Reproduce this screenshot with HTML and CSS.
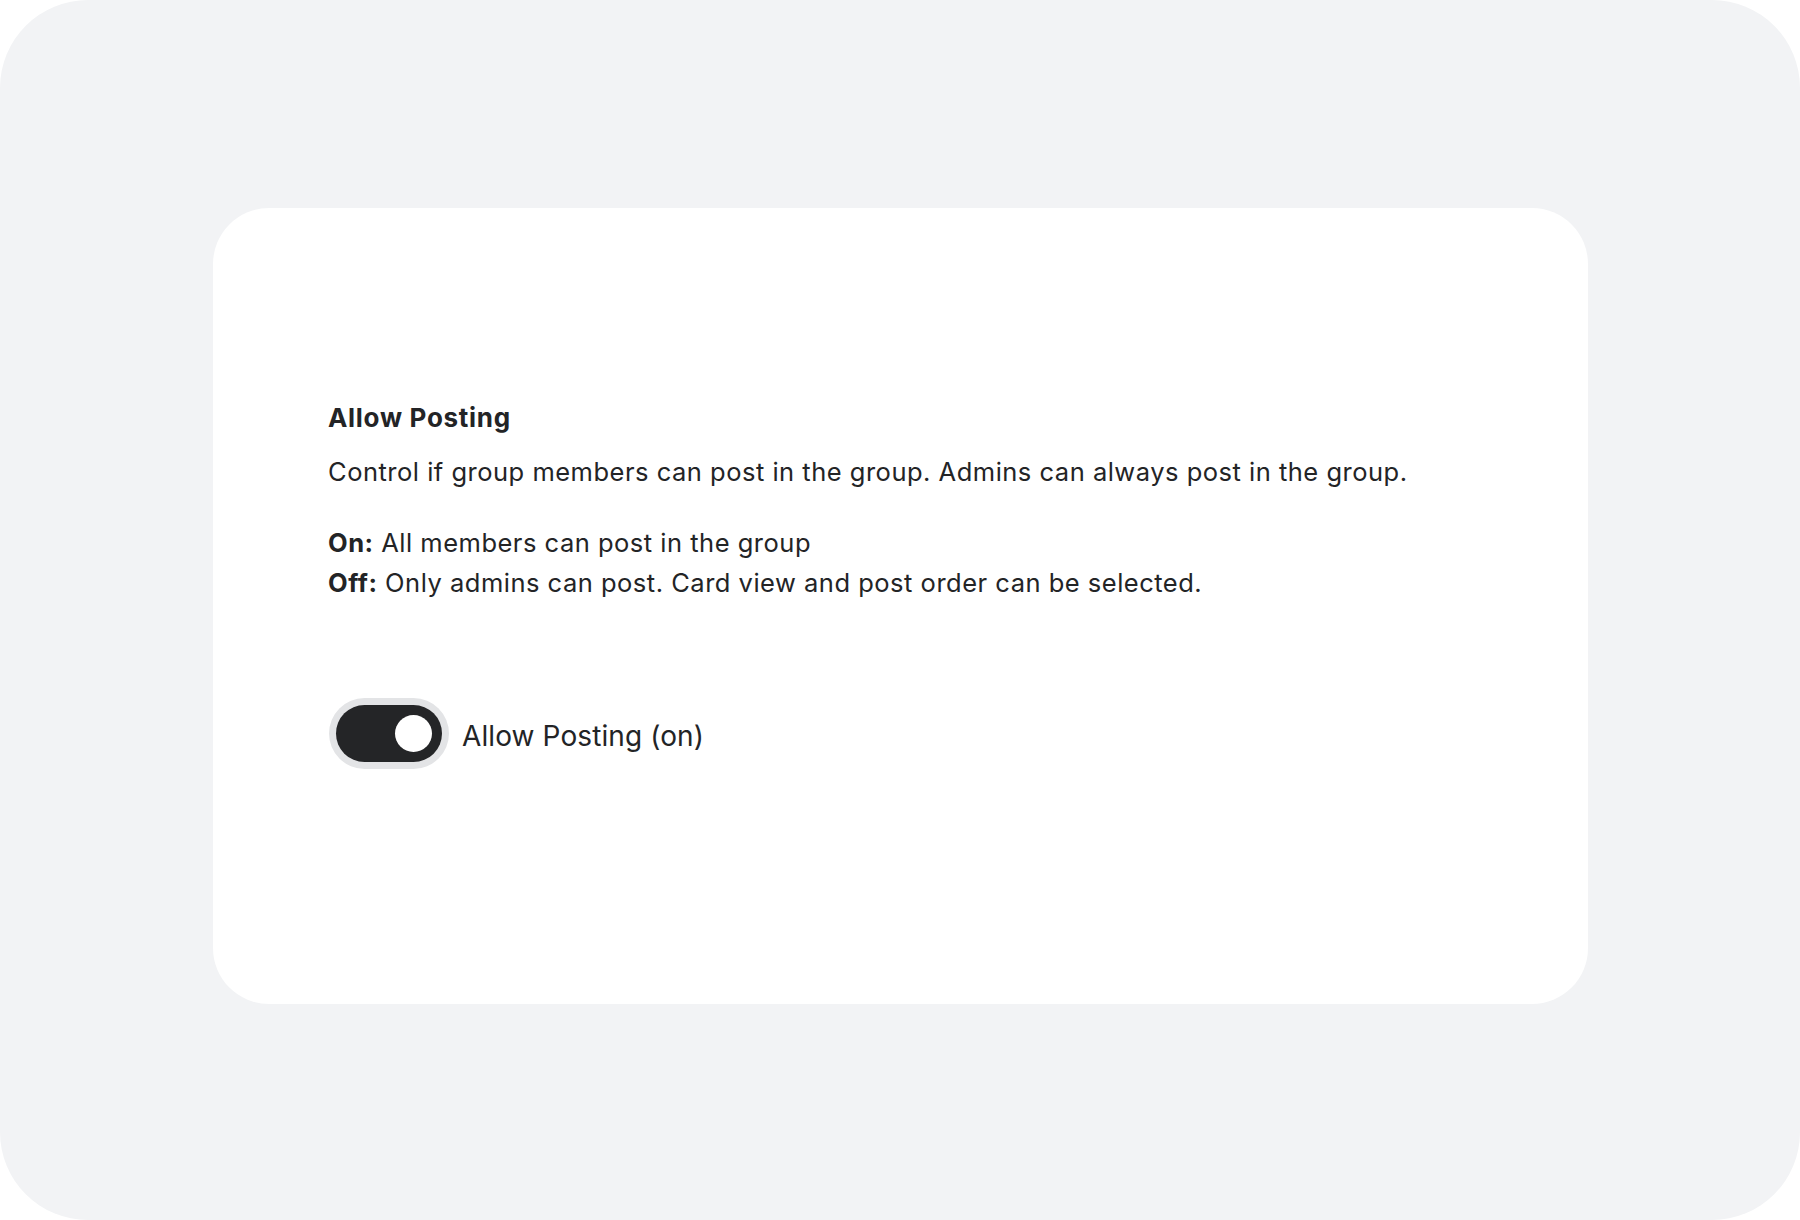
FILE: index.html
```html
<!DOCTYPE html>
<html>
  <head>
    <title>Group settings</title>
    <link rel="stylesheet" href="styles.css">
  </head>
  <body>
    <div class="frame">
      <div class="card">
        <h2 class="setting-title">Allow Posting</h2>
        <p class="setting-desc">Control if group members can post in the group. Admins can always post in the group.</p>
        <p class="setting-modes">
          <b>On:</b> All members can post in the group<br>
          <b>Off:</b> Only admins can post. Card view and post order can be selected.
        </p>

        <label class="switch-row">
          <input type="checkbox" class="switch-input" checked>
          <span class="switch-track"><span class="switch-knob"></span></span>
          <span class="switch-label">Allow Posting (on)</span>
        </label>
      </div>
    </div>
  </body>
</html>
```

FILE: styles.css
```css
  /* Page + grey backdrop */
  body {
    margin: 0;
    background: #ffffff;
    font-family: Inter, "Liberation Sans", sans-serif;
    color: #232426;
  }
  .frame {
    width: 1800px;
    height: 1220px;
    box-sizing: border-box;
    padding: 208px 212px 0 213px;
    background-color: #f2f3f5;
    border-radius: 88px;
  }
  /* White settings card */
  .card {
    height: 796px;
    box-sizing: border-box;
    padding: 194px 115px 0 115px;
    background-color: #ffffff;
    border-radius: 56px;
  }
  .setting-title {
    margin: 0;
    font-size: 26px;
    line-height: 32px;
    font-weight: 700;
    letter-spacing: 0.7px;
  }
  .setting-desc {
    margin: 22px 0 0 0;
    font-size: 25.5px;
    line-height: 32px;
    letter-spacing: 0.5px;
  }
  .setting-modes {
    margin: 35px 0 0 0;
    font-size: 25.5px;
    line-height: 40px;
    letter-spacing: 0.5px;
  }
  .setting-modes b {
    font-weight: 700;
  }
  /* Toggle switch */
  .switch-row {
    display: flex;
    align-items: center;
    gap: 20px;
    margin-top: 102px;
    margin-left: 8px;
    cursor: pointer;
  }
  .switch-input {
    display: none;
  }
  .switch-track {
    display: flex;
    justify-content: flex-end;
    align-items: center;
    width: 106px;
    height: 57px;
    box-sizing: border-box;
    padding: 0 10px;
    border-radius: 29px;
    background-color: #242527;
    box-shadow: 0 0 0 7px #e3e4e6;
  }
  .switch-knob {
    width: 37px;
    height: 37px;
    border-radius: 50%;
    background-color: #ffffff;
  }
  .switch-label {
    font-size: 28px;
    line-height: 36px;
    letter-spacing: 0.1px;
    padding-top: 5px;
  }
```
